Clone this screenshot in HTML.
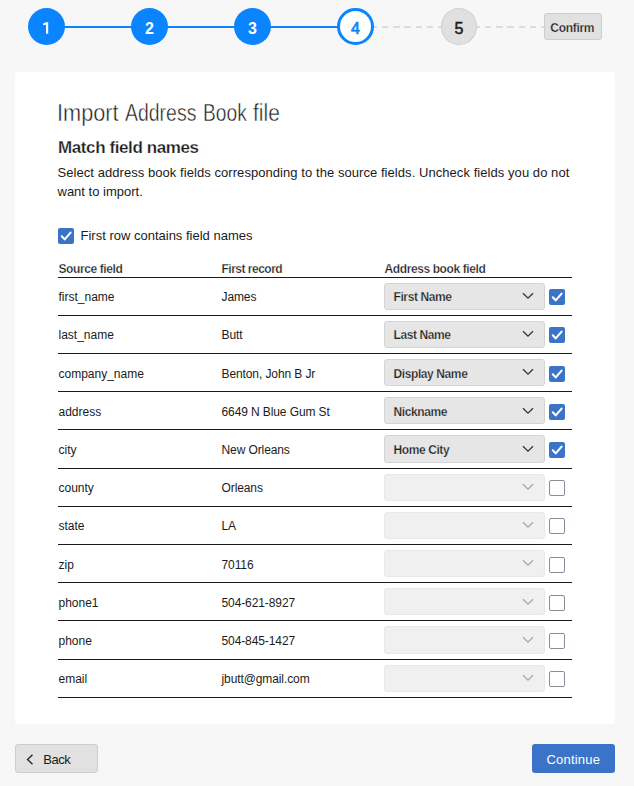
<!DOCTYPE html>
<html><head><meta charset="utf-8">
<style>
*{box-sizing:border-box;margin:0;padding:0}
html,body{width:634px;height:786px;overflow:hidden;background:#f7f7f7;font-family:"Liberation Sans",sans-serif;color:#1b1b1b}
.a{position:absolute;white-space:nowrap;line-height:1}
.step{position:absolute;width:37px;height:37px;border-radius:50%;top:8px;text-align:center;font-weight:700;font-size:16px;line-height:41px}
.done{background:#0a84ff;color:#fff}
.cur{background:#fff;border:3px solid #0a84ff;color:#0a84ff;font-weight:400;line-height:35px;-webkit-text-stroke:0.7px #0a84ff}
.todo{background:#e0e0e0;border:1px solid #d0d0d0;color:#1b1b1b;line-height:39.5px;width:36px;height:36.6px;font-weight:400;-webkit-text-stroke:0.5px #1b1b1b}
.ln{position:absolute;top:26px;height:2px;background:#0a84ff}
.dash{position:absolute;top:26px;height:2px;background:repeating-linear-gradient(90deg,#dcdcdc 0 6.3px,transparent 6.3px 11.13px)}
.panel{position:absolute;left:15px;top:72px;width:600px;height:652px;background:#fff;border-radius:3px}
.hl{position:absolute;left:58px;width:514px;height:1px;background:#1b1b1b}
.sel{position:absolute;left:384px;width:161px;height:27px;border-radius:3px}
.sel.on{background:#e6e6e6;border:1px solid #d4d4d4}
.sel.off{background:#f0f0f0;border:1px solid #e8e8e8}
.cb{position:absolute;width:16px;height:16px;border-radius:2px}
.cb.on{background:#3a74c9}
.cb.off{background:#fff;border:1px solid #8e8b9c}
.chev{position:absolute;left:522px;width:12px;height:8px}
.t12{font-size:12px}
.ttl{top:102px;font-size:23px;color:#1b1b1b;-webkit-text-stroke:0.45px #fff;transform-origin:0 0}
.b{font-weight:700}
.sw{-webkit-text-stroke:0.25px #fff}
.sg{-webkit-text-stroke:0.25px #e6e6e6}
.sc{-webkit-text-stroke:0.25px #e1e1e1}
</style></head><body>
<div class="ln" style="left:60px;width:300px"></div>
<div class="dash" style="left:371px;width:72px"></div>
<div class="dash" style="left:474px;width:71px"></div>
<div class="step done" style="left:28px"></div><svg style="position:absolute;left:38px;top:18px;width:18px;height:20px" viewBox="38 18 18 20"><path d="M46.0 22.3 L48.2 22.3 L48.2 33.8 L46.0 33.8 L46.0 24.7 L43.2 25.3 L43.2 23.5 Z" fill="#fff"/></svg>
<div class="step done" style="left:131px">2</div>
<div class="step done" style="left:234px">3</div>
<div class="step cur" style="left:337px">4</div>
<div class="step todo" style="left:441px">5</div>
<div style="position:absolute;left:544px;top:13px;width:58px;height:26.5px;background:#e1e1e1;border:1px solid #cdcdcd;border-radius:3px"></div>
<div class="a b t12 sc" style="left:550.3px;top:21.5px;letter-spacing:-0.3px">Confirm</div>

<div class="panel"></div>
<div class="a ttl" style="left:56.91px;transform:scaleX(0.946)">Import</div><div class="a ttl" style="left:125.40px;transform:scaleX(0.846)">Address</div><div class="a ttl" style="left:203.33px;transform:scaleX(0.835)">Book</div><div class="a ttl" style="left:253.30px;transform:scaleX(0.914)">file</div>
<div class="a b sw" style="left:58px;top:138.5px;font-size:17px;letter-spacing:-0.4px">Match field names</div>
<div class="a" style="left:57.5px;top:165.6px;font-size:13px;letter-spacing:0.06px">Select address book fields corresponding to the source fields. Uncheck fields you do not</div>
<div class="a" style="left:57.5px;top:185px;font-size:13px">want to import.</div>

<svg class="cb on" style="left:58px;top:228px" viewBox="0 0 16 16"><path d="M3.8 8.3 L6.7 11.4 L12.6 4.6" fill="none" stroke="#fff" stroke-width="2.1" stroke-linecap="round" stroke-linejoin="round"/></svg>
<div class="a" style="left:80.5px;top:229px;font-size:13px">First row contains field names</div>

<div class="a b t12 sw" style="left:58.5px;top:262.6px;letter-spacing:-0.4px">Source field</div>
<div class="a b t12 sw" style="left:221.5px;top:262.6px;letter-spacing:-0.5px">First record</div>
<div class="a b t12 sw" style="left:384.5px;top:262.6px;letter-spacing:-0.4px">Address book field</div>
<div class="hl" style="top:277px"></div>
<div class="hl" style="top:315px"></div>
<div class="a t12" style="left:58.5px;top:290.84px">first_name</div>
<div class="a t12" style="left:221.5px;top:290.84px;letter-spacing:-0.1px">James</div>
<div class="sel on" style="top:283px;height:27px"></div>
<div class="a b t12 sg" style="left:393.5px;top:290.84px;letter-spacing:-0.4px">First Name</div>
<svg class="chev" style="top:292px" viewBox="0 0 12 8"><path d="M1 1.2 L6 6.2 L11 1.2" fill="none" stroke="#333" stroke-width="1.3"/></svg>
<svg class="cb on" style="left:549px;top:289px" viewBox="0 0 16 16"><path d="M3.8 8.3 L6.7 11.4 L12.6 4.6" fill="none" stroke="#fff" stroke-width="2.1" stroke-linecap="round" stroke-linejoin="round"/></svg>
<div class="hl" style="top:353px"></div>
<div class="a t12" style="left:58.5px;top:328.84px">last_name</div>
<div class="a t12" style="left:221.5px;top:328.84px;letter-spacing:-0.1px">Butt</div>
<div class="sel on" style="top:321px;height:27px"></div>
<div class="a b t12 sg" style="left:393.5px;top:328.84px;letter-spacing:-0.4px">Last Name</div>
<svg class="chev" style="top:330px" viewBox="0 0 12 8"><path d="M1 1.2 L6 6.2 L11 1.2" fill="none" stroke="#333" stroke-width="1.3"/></svg>
<svg class="cb on" style="left:549px;top:327px" viewBox="0 0 16 16"><path d="M3.8 8.3 L6.7 11.4 L12.6 4.6" fill="none" stroke="#fff" stroke-width="2.1" stroke-linecap="round" stroke-linejoin="round"/></svg>
<div class="hl" style="top:391px"></div>
<div class="a t12" style="left:58.5px;top:367.84px">company_name</div>
<div class="a t12" style="left:221.5px;top:367.84px;letter-spacing:-0.1px">Benton, John B Jr</div>
<div class="sel on" style="top:359px;height:27px"></div>
<div class="a b t12 sg" style="left:393.5px;top:367.84px;letter-spacing:-0.4px">Display Name</div>
<svg class="chev" style="top:368px" viewBox="0 0 12 8"><path d="M1 1.2 L6 6.2 L11 1.2" fill="none" stroke="#333" stroke-width="1.3"/></svg>
<svg class="cb on" style="left:549px;top:366px" viewBox="0 0 16 16"><path d="M3.8 8.3 L6.7 11.4 L12.6 4.6" fill="none" stroke="#fff" stroke-width="2.1" stroke-linecap="round" stroke-linejoin="round"/></svg>
<div class="hl" style="top:429px"></div>
<div class="a t12" style="left:58.5px;top:405.84px">address</div>
<div class="a t12" style="left:221.5px;top:405.84px;letter-spacing:-0.1px">6649 N Blue Gum St</div>
<div class="sel on" style="top:397px;height:27px"></div>
<div class="a b t12 sg" style="left:393.5px;top:405.84px;letter-spacing:-0.4px">Nickname</div>
<svg class="chev" style="top:407px" viewBox="0 0 12 8"><path d="M1 1.2 L6 6.2 L11 1.2" fill="none" stroke="#333" stroke-width="1.3"/></svg>
<svg class="cb on" style="left:549px;top:404px" viewBox="0 0 16 16"><path d="M3.8 8.3 L6.7 11.4 L12.6 4.6" fill="none" stroke="#fff" stroke-width="2.1" stroke-linecap="round" stroke-linejoin="round"/></svg>
<div class="hl" style="top:468px"></div>
<div class="a t12" style="left:58.5px;top:443.84px">city</div>
<div class="a t12" style="left:221.5px;top:443.84px;letter-spacing:-0.1px">New Orleans</div>
<div class="sel on" style="top:435px;height:28px"></div>
<div class="a b t12 sg" style="left:393.5px;top:443.84px;letter-spacing:-0.4px">Home City</div>
<svg class="chev" style="top:445px" viewBox="0 0 12 8"><path d="M1 1.2 L6 6.2 L11 1.2" fill="none" stroke="#333" stroke-width="1.3"/></svg>
<svg class="cb on" style="left:549px;top:442px" viewBox="0 0 16 16"><path d="M3.8 8.3 L6.7 11.4 L12.6 4.6" fill="none" stroke="#fff" stroke-width="2.1" stroke-linecap="round" stroke-linejoin="round"/></svg>
<div class="hl" style="top:506px"></div>
<div class="a t12" style="left:58.5px;top:481.84px">county</div>
<div class="a t12" style="left:221.5px;top:481.84px;letter-spacing:-0.1px">Orleans</div>
<div class="sel off" style="top:474px;height:27px"></div>
<svg class="chev" style="top:483px" viewBox="0 0 12 8"><path d="M1 1.2 L6 6.2 L11 1.2" fill="none" stroke="#a6a6a6" stroke-width="1.3"/></svg>
<div class="cb off" style="left:549px;top:480px"></div>
<div class="hl" style="top:544px"></div>
<div class="a t12" style="left:58.5px;top:519.84px">state</div>
<div class="a t12" style="left:221.5px;top:519.84px;letter-spacing:-0.1px">LA</div>
<div class="sel off" style="top:512px;height:27px"></div>
<svg class="chev" style="top:521px" viewBox="0 0 12 8"><path d="M1 1.2 L6 6.2 L11 1.2" fill="none" stroke="#a6a6a6" stroke-width="1.3"/></svg>
<div class="cb off" style="left:549px;top:518px"></div>
<div class="hl" style="top:582px"></div>
<div class="a t12" style="left:58.5px;top:558.84px">zip</div>
<div class="a t12" style="left:221.5px;top:558.84px;letter-spacing:-0.1px">70116</div>
<div class="sel off" style="top:550px;height:27px"></div>
<svg class="chev" style="top:559px" viewBox="0 0 12 8"><path d="M1 1.2 L6 6.2 L11 1.2" fill="none" stroke="#a6a6a6" stroke-width="1.3"/></svg>
<div class="cb off" style="left:549px;top:557px"></div>
<div class="hl" style="top:620px"></div>
<div class="a t12" style="left:58.5px;top:596.84px">phone1</div>
<div class="a t12" style="left:221.5px;top:596.84px;letter-spacing:-0.1px">504-621-8927</div>
<div class="sel off" style="top:588px;height:27px"></div>
<svg class="chev" style="top:598px" viewBox="0 0 12 8"><path d="M1 1.2 L6 6.2 L11 1.2" fill="none" stroke="#a6a6a6" stroke-width="1.3"/></svg>
<div class="cb off" style="left:549px;top:595px"></div>
<div class="hl" style="top:659px"></div>
<div class="a t12" style="left:58.5px;top:634.84px">phone</div>
<div class="a t12" style="left:221.5px;top:634.84px;letter-spacing:-0.1px">504-845-1427</div>
<div class="sel off" style="top:626px;height:28px"></div>
<svg class="chev" style="top:636px" viewBox="0 0 12 8"><path d="M1 1.2 L6 6.2 L11 1.2" fill="none" stroke="#a6a6a6" stroke-width="1.3"/></svg>
<div class="cb off" style="left:549px;top:633px"></div>
<div class="hl" style="top:697px"></div>
<div class="a t12" style="left:58.5px;top:672.84px">email</div>
<div class="a t12" style="left:221.5px;top:672.84px;letter-spacing:-0.1px">jbutt@gmail.com</div>
<div class="sel off" style="top:665px;height:27px"></div>
<svg class="chev" style="top:674px" viewBox="0 0 12 8"><path d="M1 1.2 L6 6.2 L11 1.2" fill="none" stroke="#a6a6a6" stroke-width="1.3"/></svg>
<div class="cb off" style="left:549px;top:671px"></div>

<div style="position:absolute;left:15px;top:744px;width:83px;height:29px;background:#e1e1e1;border:1px solid #cdcdcd;border-radius:3px"></div>
<svg style="position:absolute;left:26px;top:754px;width:8px;height:11px" viewBox="0 0 8 11"><path d="M6.5 0.8 L1.5 5.5 L6.5 10.2" fill="none" stroke="#222" stroke-width="1.3"/></svg>
<div class="a" style="left:43.3px;top:753px;font-size:13px;letter-spacing:-0.5px">Back</div>
<div style="position:absolute;left:532px;top:744px;width:83px;height:29px;background:#3a73c8;border-radius:3px"></div>
<div class="a" style="left:546.5px;top:753px;font-size:13px;color:#fff;letter-spacing:0.2px">Continue</div>
</body></html>
